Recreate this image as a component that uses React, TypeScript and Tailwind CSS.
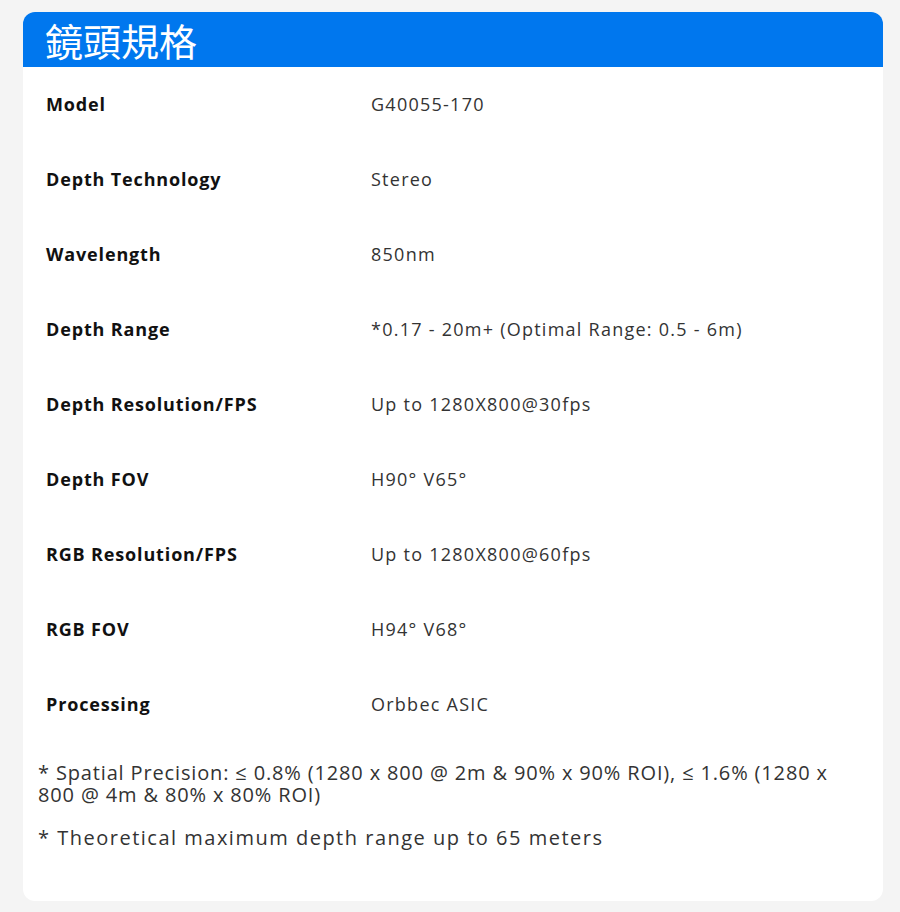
const specs: [string, string][] = [
  ["Model", "G40055-170"],
  ["Depth Technology", "Stereo"],
  ["Wavelength", "850nm"],
  ["Depth Range", "*0.17 - 20m+ (Optimal Range: 0.5 - 6m)"],
  ["Depth Resolution/FPS", "Up to 1280X800@30fps"],
  ["Depth FOV", "H90° V65°"],
  ["RGB Resolution/FPS", "Up to 1280X800@60fps"],
  ["RGB FOV", "H94° V68°"],
  ["Processing", "Orbbec ASIC"],
];

export default function App() {
  return (
    <div className="min-h-[912px] w-[900px] bg-[#f4f4f4] pt-3 pl-[23px] pr-[17px] pb-[13px] font-['Open_Sans',sans-serif]">
      <div className="rounded-xl bg-white pb-[52px]">
        <div className="flex h-[55px] items-center rounded-t-xl bg-[#0077ee] pl-[22px]">
          <h2 className="text-[38px] leading-none text-white font-['Noto_Sans_CJK_TC',sans-serif] font-normal">
            鏡頭規格
          </h2>
        </div>
        <div className="px-[23px]">
          {specs.map(([label, value]) => (
            <div key={label} className="flex h-[75px] items-center">
              <div className="w-[325px] text-[18px] font-bold tracking-[0.85px] text-[#111]">{label}</div>
              <div className="text-[18px] tracking-[1.25px] text-[#333]">{value}</div>
            </div>
          ))}
        </div>
        <div className="mt-5 pl-[15px] pr-[30px] text-[20px] leading-[22px] text-[#333]">
          <p className="tracking-[0.85px]">
            * Spatial Precision: ≤ 0.8% (1280 x 800 @ 2m &amp; 90% x 90% ROI), ≤ 1.6% (1280 x 800 @ 4m &amp; 80% x 80% ROI)
          </p>
          <p className="mt-[21px] tracking-[1.5px]">* Theoretical maximum depth range up to 65 meters</p>
        </div>
      </div>
    </div>
  );
}
